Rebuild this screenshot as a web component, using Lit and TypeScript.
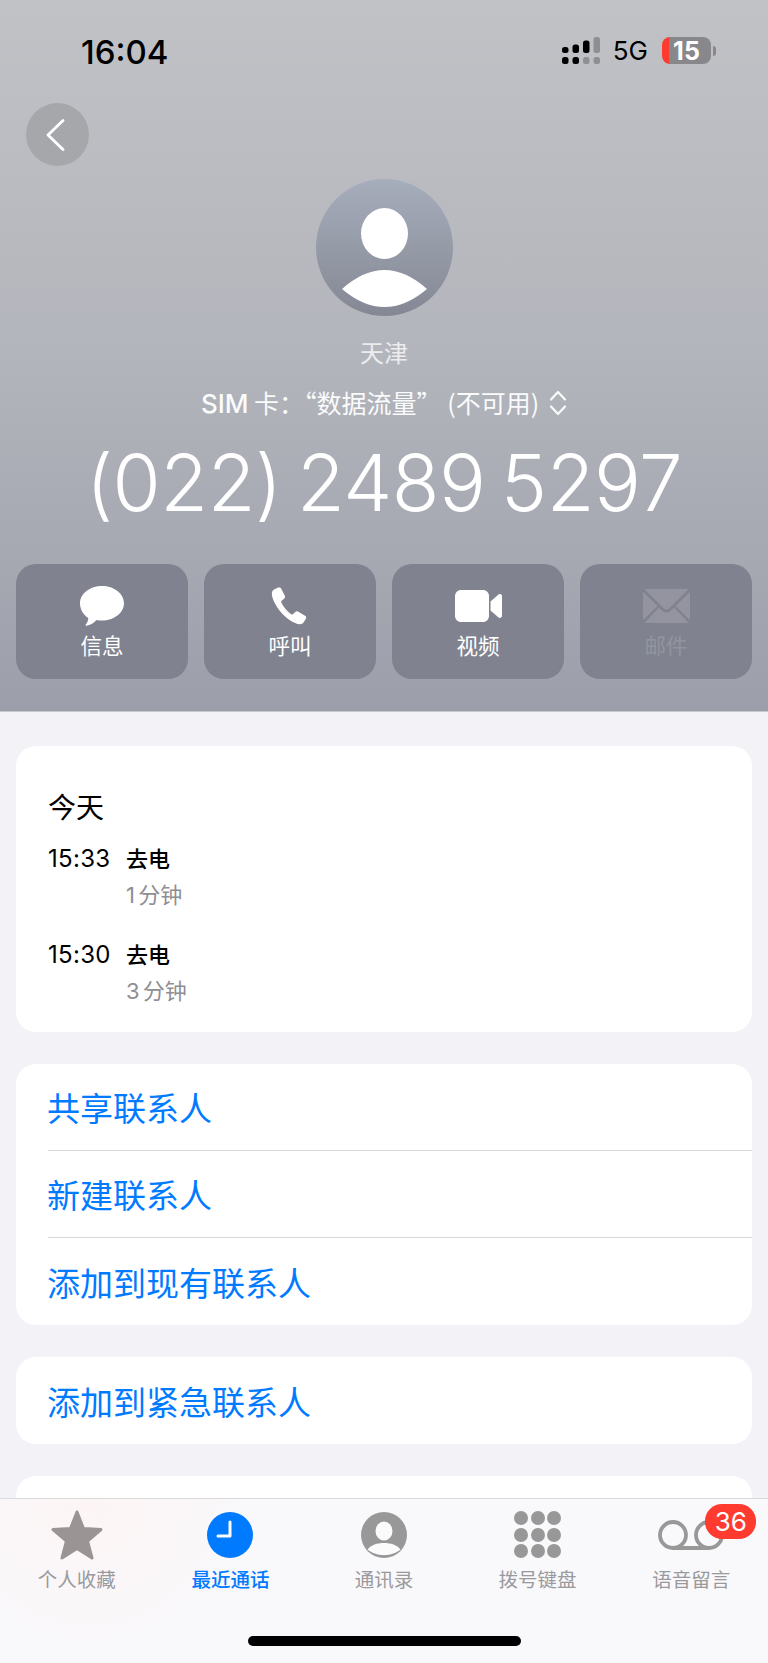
import { LitElement, html, css, svg } from "lit";
import { customElement } from "lit/decorators.js";

const icons = {
  message: svg`<svg width="44" height="40" viewBox="0 0 44 40"><path fill="#fff" d="M22 0C34 0 44 7.700 44 17.200S34 34.500 22 34.500c-1.900 0-3.800-.2-5.500-.6C14 36.500 10.500 39 6.500 39.800c-.9.100-1.300-.6-.8-1.200 1.500-1.800 2.500-3.900 2.600-6.700C3.300 28.700 0 23.300 0 17.200 0 7.700 10 0 22 0Z"/></svg>`,
  phone: svg`<svg width="39" height="39" viewBox="0 0 38 38"><path fill="#fff" d="M3 2.500 7 .6c1.200-.5 2.400-.1 3 1l3.500 7c.5 1 .2 2.200-.7 2.900l-2.300 1.700c-.6.500-.7 1.200-.4 1.900 2.300 4.600 5.400 8.400 9.500 11.400.6.500 1.400.4 2-.1l2-2c.8-.8 2-1 3-.4l6.600 4c1.100.6 1.400 1.900.8 3l-2 3.200c-1 1.600-2.800 2.400-4.600 2.100C16 34 3.500 20 1 8.500.5 6 1 3.700 3 2.500Z"/></svg>`,
  video: svg`<svg width="47" height="32" viewBox="0 0 47 32"><path fill="#fff" d="M6 0h22c3.300 0 6 2.700 6 6v20c0 3.300-2.700 6-6 6H6c-3.300 0-6-2.700-6-6V6c0-3.300 2.700-6 6-6Z"/><path fill="#fff" d="M35.500 11.500 43.500 4.500c1.200-1 3.500-.2 3.500 1.400v20.200c0 1.600-2.300 2.400-3.500 1.400l-8-7Z"/></svg>`,
  mail: svg`<svg width="47" height="34" viewBox="0 0 47 34"><g fill="#93949f"><path d="M3 0h41c.6 0 1.100.1 1.500.3L26 19.500c-1.400 1.400-3.600 1.400-5 0L1.500.3C1.900.1 2.400 0 3 0Z"/><path d="M0 2.800 14.500 17 0 31.200Z"/><path d="M47 2.800 32.500 17 47 31.200Z"/><path d="M16 18.500l3.500 3.400c2.200 2.100 5.800 2.100 8 0l3.500-3.400L45.500 33.700c-.4.200-.9.300-1.500.3H3c-.6 0-1.100-.1-1.500-.3Z"/></g></svg>`,
  star: svg`<svg width="52" height="50" viewBox="0 0 52 50"><path fill="#9a9495" stroke="#9a9495" stroke-width="3" stroke-linejoin="round" d="M26 2 32.500 18.500 50 19.500 36.500 31 41 48 26 38.500 11 48 15.500 31 2 19.500 19.500 18.500Z"/></svg>`,
  clock: svg`<svg width="46" height="46" viewBox="0 0 46 46"><circle cx="23" cy="23" r="23" fill="#007aff"/><path fill="none" stroke="#fff" stroke-width="3" stroke-linecap="round" stroke-linejoin="round" d="M23 10v14H11"/></svg>`,
  contact: svg`<svg width="46" height="46" viewBox="0 0 46 46"><circle cx="23" cy="23" r="23" fill="#989898"/><ellipse cx="23" cy="19" rx="8.500" ry="9.500" fill="#fbfbfc"/><path fill="#fbfbfc" d="M6.500 37.500C10 33 16 31 23 31s13 2 16.500 6.500C35.500 41 29.500 43 23 43S10.500 41 6.500 37.500Z"/></svg>`,
  voicemail: svg`<svg width="66" height="30" viewBox="0 0 66 30"><g fill="none" stroke="#989898" stroke-width="3.800"><circle cx="15" cy="15" r="13"/><circle cx="51" cy="15" r="13"/><path d="M15 28h36"/></g></svg>`,
};

@customElement("app-root")
export class AppRoot extends LitElement {
  static styles = css`
    :host {
      display: flex;
      flex-direction: column;
      height: 1663px;
      overflow: hidden;
      background: #f2f2f7;
      font-family: Inter, "Noto Sans CJK SC", sans-serif;
      color: #000;
    }
    * { box-sizing: border-box; }

    .header {
      height: 712px;
      flex: none;
      background: linear-gradient(180deg, #c1c2c6 0%, #b3b5bc 50%, #9c9eaa 100%);
      border-bottom: 1px solid #c8c8cc;
      display: flex;
      flex-direction: column;
    }
    .status {
      height: 103px;
      flex: none;
      padding: 0 52px 0 81px;
      display: flex;
      align-items: flex-start;
      justify-content: space-between;
    }
    .time {
      font-size: 33px;
      font-weight: 500;
      line-height: 40px;
      margin-top: 32px;
    }
    .status-right {
      display: flex;
      align-items: center;
      margin-top: 37px;
      height: 27px;
    }
    .net {
      font-size: 26px;
      font-weight: 400;
      margin: 0 14px 0 13px;
      line-height: 27px;
    }
    .battery {
      width: 49px;
      height: 27px;
      border-radius: 8px;
      overflow: hidden;
      background: #88888c;
      display: flex;
      justify-content: center;
      align-items: center;
      color: #fff;
      font-size: 25px;
      font-weight: 700;
      padding-right: 7px;
      border-left: 7px solid #ff3b30;
    }
    .nub {
      width: 3px;
      height: 10px;
      margin-left: 2px;
      background: #88888c;
      border-radius: 0 3px 3px 0;
    }

    .nav {
      padding-left: 26px;
      height: 76px;
      flex: none;
    }
    .back {
      width: 63px;
      height: 63px;
      border-radius: 50%;
      background: #a6a7ab;
      display: flex;
      align-items: center;
      justify-content: center;
    }
    .back svg { margin-right: 6px; }

    .who {
      display: flex;
      flex-direction: column;
      align-items: center;
      color: #fff;
    }
    .avatar {
      width: 137px;
      height: 137px;
      display: block;
    }
    .city {
      font-size: 24px;
      line-height: 32px;
      margin-top: 22px;
      opacity: 0.75;
    }
    .sim {
      display: flex;
      align-items: center;
      gap: 10px;
      font-family: "Noto Sans CJK SC", sans-serif;
      font-size: 25px;
      line-height: 32px;
      margin-top: 16px;
      opacity: 0.95;
    }
    .sim .latin {
      font-family: Inter, sans-serif;
      font-size: 26px;
      font-weight: 500;
    }
    .number {
      font-size: 78px;
      font-weight: 300;
      line-height: 92px;
      margin-top: 17px;
      letter-spacing: -0.500px;
      word-spacing: -6px;
    }

    .actions {
      display: grid;
      grid-template-columns: repeat(4, 172px);
      gap: 16px;
      padding: 0 16px;
      margin-top: 35px;
    }
    .action {
      height: 115px;
      border-radius: 20px;
      background: #80828f;
      color: #fff;
      font-size: 21.500px;
      display: flex;
      flex-direction: column;
      align-items: center;
    }
    .action .glyph {
      height: 56px;
      margin-top: 14px;
      display: flex;
      align-items: center;
      justify-content: center;
    }
    .action .label {
      line-height: 28px;
      margin-top: -2px;
    }
    .action.off { color: #93949f; }

    .list {
      flex: 1;
      min-height: 0;
      overflow: hidden;
      padding: 34px 16px 0;
      display: flex;
      flex-direction: column;
      gap: 32px;
    }
    .card {
      flex: none;
      background: #fff;
      border-radius: 20px;
    }
    .recent {
      height: 286px;
      padding: 44px 32px 0;
    }
    .day {
      font-size: 28px;
      line-height: 36px;
    }
    .calls { margin-top: 18px; }
    .call {
      display: grid;
      grid-template-columns: 78px 1fr;
      margin-bottom: 30px;
    }
    .call .at {
      font-size: 24px;
      line-height: 30px;
      letter-spacing: 0.300px;
    }
    .call .kind {
      font-size: 22px;
      line-height: 30px;
      font-weight: 500;
    }
    .call .len {
      grid-column: 2;
      font-size: 22px;
      line-height: 30px;
      margin-top: 6px;
      color: #8e8e93;
      word-spacing: -3px;
    }
    .row {
      height: 87px;
      margin-left: 32px;
      display: flex;
      align-items: center;
      font-size: 33px;
      color: #007aff;
      border-bottom: 1px solid #d8d8dc;
      text-indent: -1px;
    }
    .row:last-child { border-bottom: none; }
    .filler { height: 200px; }

    .tabs {
      height: 165px;
      flex: none;
      border-top: 1px solid #d9d9dc;
      background: radial-gradient(circle at 90px 0, #fdf5f5 0, #f9f8fa 150px), #f8f8fa;
      display: grid;
      grid-template-columns: repeat(5, 1fr);
      grid-template-rows: 94px 1fr;
    }
    .tab {
      display: flex;
      flex-direction: column;
      align-items: center;
      font-size: 19.500px;
      color: #9a9a9e;
    }
    .tab.on {
      color: #007aff;
      font-weight: 500;
    }
    .tab .glyph {
      height: 62px;
      width: 100%;
      display: flex;
      align-items: center;
      justify-content: center;
      position: relative;
      margin-top: 5px;
    }
    .tab .label {
      line-height: 26px;
      margin-top: 2px;
    }
    .dots {
      display: grid;
      grid-template-columns: repeat(3, 14px);
      gap: 2.500px;
    }
    .dots i {
      width: 14px;
      height: 14px;
      border-radius: 50%;
      background: #989898;
    }
    .badge {
      position: absolute;
      left: 91px;
      top: 0;
      width: 51px;
      height: 35px;
      border-radius: 17px;
      background: #ff3b30;
      color: #fff;
      font-size: 26px;
      line-height: 35px;
      text-align: center;
    }
    .home {
      grid-column: 1 / -1;
      justify-self: center;
      width: 273px;
      height: 10px;
      border-radius: 5px;
      background: #000;
      margin-top: 43px;
    }
  `;

  render() {
    return html`
      <div class="header">
        <div class="status">
          <div class="time">16:04</div>
          <div class="status-right">
            <svg width="38" height="27" viewBox="0 0 38 27">
              <g fill="#000">
                <rect x="0" y="10" width="6.500" height="6" rx="2.500" />
                <rect x="10.500" y="7.500" width="6.500" height="8.500" rx="2.500" />
                <rect x="21" y="3.500" width="6.500" height="12.500" rx="2.500" />
                <rect x="0" y="20" width="6.500" height="7" rx="2.500" />
                <rect x="10.500" y="20" width="6.500" height="7" rx="2.500" />
              </g>
              <g fill="#8f8f93">
                <rect x="31.500" y="0" width="6.500" height="16" rx="2.500" />
                <rect x="21" y="20" width="6.500" height="7" rx="2.500" />
                <rect x="31.500" y="20" width="6.500" height="7" rx="2.500" />
              </g>
            </svg>
            <div class="net">5G</div>
            <div class="battery">15</div>
            <div class="nub"></div>
          </div>
        </div>
        <div class="nav">
          <div class="back">
            <svg width="20" height="32" viewBox="0 0 20 32">
              <path d="M18 1.500 3 16l15 14.500" fill="none" stroke="#fff" stroke-width="2.800" stroke-linecap="round" stroke-linejoin="round" />
            </svg>
          </div>
        </div>
        <div class="who">
          <svg class="avatar" viewBox="0 0 137 137">
            <defs>
              <linearGradient id="av" x1="0" y1="0" x2="0" y2="1">
                <stop offset="0" stop-color="#a6adbb" />
                <stop offset="1" stop-color="#858894" />
              </linearGradient>
            </defs>
            <circle cx="68.500" cy="68.500" r="68.500" fill="url(#av)" />
            <ellipse cx="68.500" cy="54.500" rx="23.500" ry="25.500" fill="#fff" />
            <path fill="#fff" d="M26 110Q68.500 72 111 110Q68.500 146 26 110Z" />
          </svg>
          <div class="city">天津</div>
          <div class="sim">
            <span><span class="latin">SIM</span> 卡：“数据流量” (不可用)</span>
            <svg width="18" height="26" viewBox="0 0 18 26">
              <path d="M2 9.500 9 2l7 7.500M2 16.500 9 24l7-7.500" fill="none" stroke="#fff" stroke-width="2.200" stroke-linecap="round" stroke-linejoin="round" />
            </svg>
          </div>
          <div class="number">(022) 2489 5297</div>
        </div>
        <div class="actions">
          <div class="action"><div class="glyph">${icons.message}</div><div class="label">信息</div></div>
          <div class="action"><div class="glyph">${icons.phone}</div><div class="label">呼叫</div></div>
          <div class="action"><div class="glyph">${icons.video}</div><div class="label">视频</div></div>
          <div class="action off"><div class="glyph">${icons.mail}</div><div class="label">邮件</div></div>
        </div>
      </div>

      <div class="list">
        <div class="card recent">
          <div class="day">今天</div>
          <div class="calls">
            <div class="call"><div class="at">15:33</div><div class="kind">去电</div><div class="len">1 分钟</div></div>
            <div class="call"><div class="at">15:30</div><div class="kind">去电</div><div class="len">3 分钟</div></div>
          </div>
        </div>
        <div class="card">
          <div class="row">共享联系人</div>
          <div class="row">新建联系人</div>
          <div class="row">添加到现有联系人</div>
        </div>
        <div class="card">
          <div class="row">添加到紧急联系人</div>
        </div>
        <div class="card filler"></div>
      </div>

      <div class="tabs">
        <div class="tab"><div class="glyph">${icons.star}</div><div class="label">个人收藏</div></div>
        <div class="tab on"><div class="glyph">${icons.clock}</div><div class="label">最近通话</div></div>
        <div class="tab"><div class="glyph">${icons.contact}</div><div class="label">通讯录</div></div>
        <div class="tab">
          <div class="glyph"><div class="dots">${Array.from({ length: 9 }, () => html`<i></i>`)}</div></div>
          <div class="label">拨号键盘</div>
        </div>
        <div class="tab">
          <div class="glyph">${icons.voicemail}<div class="badge">36</div></div>
          <div class="label">语音留言</div>
        </div>
        <div class="home"></div>
      </div>
    `;
  }
}
